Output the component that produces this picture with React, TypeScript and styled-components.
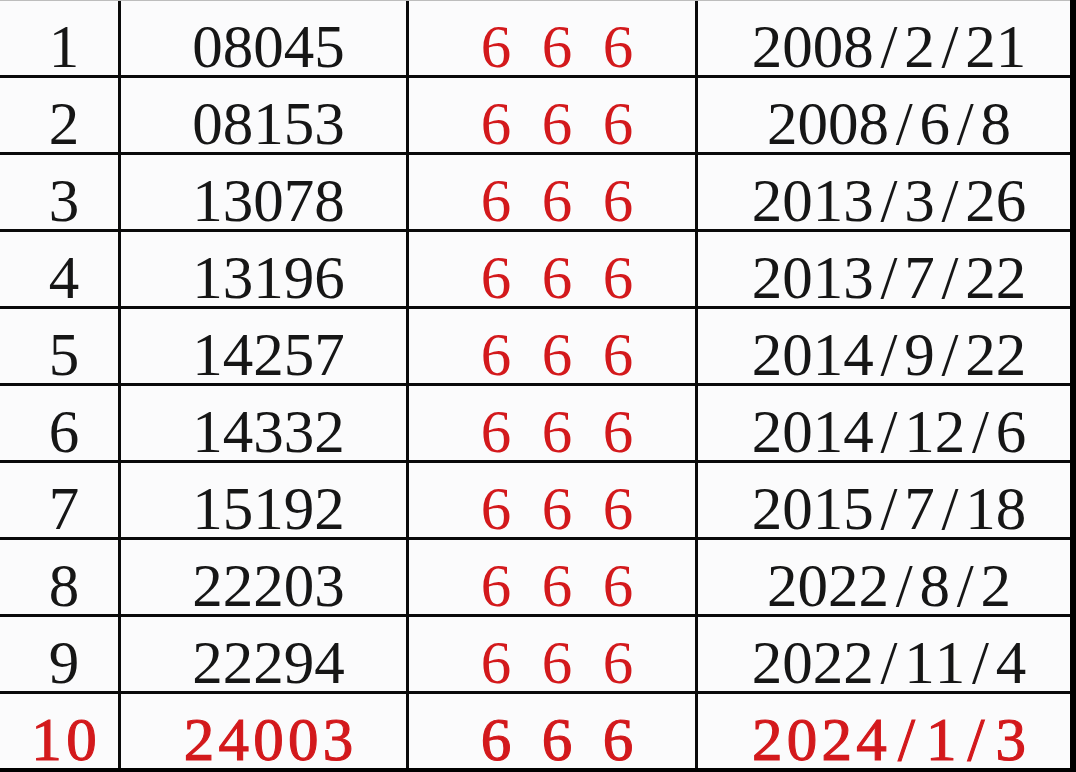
import React from "react";
import styled, { createGlobalStyle } from "styled-components";

const GlobalStyle = createGlobalStyle`
  html, body {
    margin: 0;
    padding: 0;
    background: #000;
  }
`;

const Page = styled.div`
  width: 1076px;
  height: 772px;
  background: #000;
  overflow: hidden;
`;

const Grid = styled.div`
  display: grid;
  grid-template-columns: 118px 285px 286px 372px;
  grid-auto-rows: 74px;
  gap: 3px;
  width: 1070px;
  background: #0a0a0a;
  border-top: 1px solid #bdbdbd;
  box-sizing: border-box;
`;

const Cell = styled.div<{ $red?: boolean; $strong?: boolean }>`
  background: #fbfbfc;
  display: flex;
  justify-content: center;
  align-items: flex-start;
  padding: 15px 0 0 10px;
  box-sizing: border-box;
  font-family: "Liberation Serif", "Noto Sans CJK SC", serif;
  font-size: 61px;
  line-height: 61px;
  white-space: nowrap;
  color: ${(p) => (p.$red ? "#d3191c" : "#161616")};
  -webkit-text-stroke: ${(p) => (p.$strong ? "1.1px #d3191c" : "0")};
`;

const Glyph = styled.span<{ $wide?: boolean }>`
  display: inline-block;
  width: ${(p) => (p.$wide ? "0.57em" : "0.5em")};
  text-align: center;
`;

type Row = { n: string; code: string; date: string };

const rows: Row[] = [
  { n: "1", code: "08045", date: "2008/2/21" },
  { n: "2", code: "08153", date: "2008/6/8" },
  { n: "3", code: "13078", date: "2013/3/26" },
  { n: "4", code: "13196", date: "2013/7/22" },
  { n: "5", code: "14257", date: "2014/9/22" },
  { n: "6", code: "14332", date: "2014/12/6" },
  { n: "7", code: "15192", date: "2015/7/18" },
  { n: "8", code: "22203", date: "2022/8/2" },
  { n: "9", code: "22294", date: "2022/11/4" },
  { n: "10", code: "24003", date: "2024/1/3" },
];

// half-width glyph cells, like the source sheet's font
const Mono = ({ text, wide }: { text: string; wide?: boolean }) => (
  <>
    {text.split("").map((c, i) => (
      <Glyph key={i} $wide={wide}>
        {c === " " ? "\u00a0" : c}
      </Glyph>
    ))}
  </>
);

const App = () => {
  return (
    <Page>
      <GlobalStyle />
      <Grid>
        {rows.map((r, i) => {
          const last = i === rows.length - 1;
          return (
            <React.Fragment key={r.n}>
              <Cell $red={last} $strong={last}>
                <Mono text={r.n} wide={last} />
              </Cell>
              <Cell $red={last} $strong={last}>
                <Mono text={r.code} wide={last} />
              </Cell>
              <Cell $red $strong={last}>
                <Mono text="6 6 6" />
              </Cell>
              <Cell $red={last} $strong={last}>
                <Mono text={r.date} wide={last} />
              </Cell>
            </React.Fragment>
          );
        })}
      </Grid>
    </Page>
  );
};

export default App;
